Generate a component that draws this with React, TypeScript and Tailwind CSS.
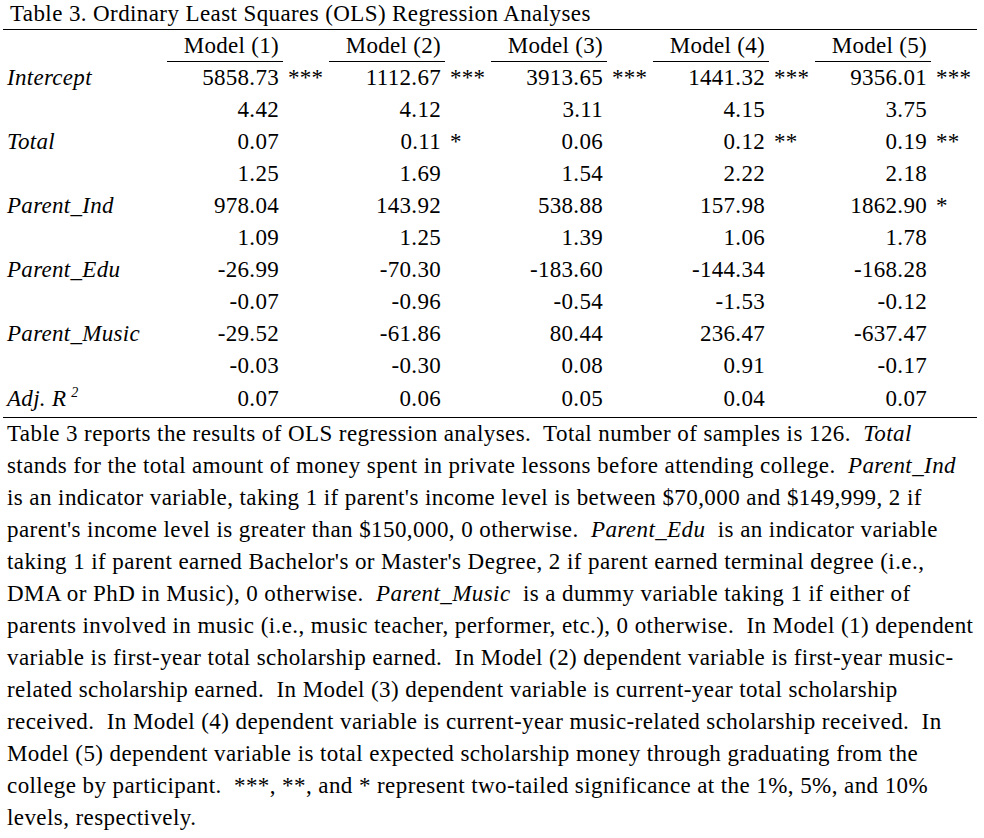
import React from "react";

type Cell = { v: string; s?: string };

const rows: { label: string; cells: Cell[] }[] = [
  { label: "Intercept", cells: [{ v: "5858.73", s: "***" }, { v: "1112.67", s: "***" }, { v: "3913.65", s: "***" }, { v: "1441.32", s: "***" }, { v: "9356.01", s: "***" }] },
  { label: "", cells: [{ v: "4.42" }, { v: "4.12" }, { v: "3.11" }, { v: "4.15" }, { v: "3.75" }] },
  { label: "Total", cells: [{ v: "0.07" }, { v: "0.11", s: "*" }, { v: "0.06" }, { v: "0.12", s: "**" }, { v: "0.19", s: "**" }] },
  { label: "", cells: [{ v: "1.25" }, { v: "1.69" }, { v: "1.54" }, { v: "2.22" }, { v: "2.18" }] },
  { label: "Parent_Ind", cells: [{ v: "978.04" }, { v: "143.92" }, { v: "538.88" }, { v: "157.98" }, { v: "1862.90", s: "*" }] },
  { label: "", cells: [{ v: "1.09" }, { v: "1.25" }, { v: "1.39" }, { v: "1.06" }, { v: "1.78" }] },
  { label: "Parent_Edu", cells: [{ v: "-26.99" }, { v: "-70.30" }, { v: "-183.60" }, { v: "-144.34" }, { v: "-168.28" }] },
  { label: "", cells: [{ v: "-0.07" }, { v: "-0.96" }, { v: "-0.54" }, { v: "-1.53" }, { v: "-0.12" }] },
  { label: "Parent_Music", cells: [{ v: "-29.52" }, { v: "-61.86" }, { v: "80.44" }, { v: "236.47" }, { v: "-637.47" }] },
  { label: "", cells: [{ v: "-0.03" }, { v: "-0.30" }, { v: "0.08" }, { v: "0.91" }, { v: "-0.17" }] },
];

const adj: Cell[] = [{ v: "0.07" }, { v: "0.06" }, { v: "0.05" }, { v: "0.04" }, { v: "0.07" }];

const para: React.ReactNode[] = [
  <>Table 3 reports the results of OLS regression analyses.  Total number of samples is 126.  <span className="italic">Total</span></>,
  <>stands for the total amount of money spent in private lessons before attending college.  <span className="italic">Parent_Ind</span></>,
  <>is an indicator variable, taking 1 if parent's income level is between $70,000 and $149,999, 2 if</>,
  <>parent's income level is greater than $150,000, 0 otherwise.  <span className="italic">Parent_Edu</span>  is an indicator variable</>,
  <>taking 1 if parent earned Bachelor's or Master's Degree, 2 if parent earned terminal degree (i.e.,</>,
  <>DMA or PhD in Music), 0 otherwise.  <span className="italic">Parent_Music</span>  is a dummy variable taking 1 if either of</>,
  <>parents involved in music (i.e., music teacher, performer, etc.), 0 otherwise.  In Model (1) dependent</>,
  <>variable is first-year total scholarship earned.  In Model (2) dependent variable is first-year music-</>,
  <>related scholarship earned.  In Model (3) dependent variable is current-year total scholarship</>,
  <>received.  In Model (4) dependent variable is current-year music-related scholarship received.  In</>,
  <>Model (5) dependent variable is total expected scholarship money through graduating from the</>,
  <>college by participant.  ***, **, and * represent two-tailed significance at the 1%, 5%, and 10%</>,
  <>levels, respectively.</>,
];

function Row({ label, cells, last }: { label: React.ReactNode; cells: Cell[]; last?: boolean }) {
  return (
    <div
      className={
        last
          ? "grid grid-cols-[164px_116px_46px_116px_46px_116px_46px_116px_46px_116px_46px] h-[36px] leading-[34px] border-b border-black"
          : "grid grid-cols-[164px_116px_46px_116px_46px_116px_46px_116px_46px_116px_46px] h-[32px] leading-[32px]"
      }
    >
      <div className="pl-[4px] italic whitespace-pre">{label}</div>
      {cells.map((c, i) => (
        <React.Fragment key={i}>
          <div className="text-right pr-[4px] whitespace-pre">{c.v}</div>
          <div className="pl-[5px] whitespace-pre">{c.s ?? ""}</div>
        </React.Fragment>
      ))}
    </div>
  );
}

export default function App() {
  return (
    <div className="w-[984px] h-[838px] bg-white text-black overflow-hidden font-['Liberation_Serif']">
      <div className="ml-[3px] w-[974px] text-[23px] tracking-[0.3px]">
        <div className="h-[30px] leading-[28px] pl-[7px] whitespace-pre border-b border-black tracking-[0.4px]">
          Table 3. Ordinary Least Squares (OLS) Regression Analyses
        </div>
        <div className="grid grid-cols-[164px_116px_46px_116px_46px_116px_46px_116px_46px_116px_46px] h-[32px] leading-[31px]">
          <div />
          {[1, 2, 3, 4, 5].map((n) => (
            <React.Fragment key={n}>
              <div className="text-right pr-[4px] border-b border-black whitespace-pre">Model ({n})</div>
              <div />
            </React.Fragment>
          ))}
        </div>
        {rows.map((r, i) => (
          <Row key={i} label={r.label} cells={r.cells} />
        ))}
        <Row
          last
          label={
            <>
              Adj. R<sup className="text-[14px] ml-[5px] relative -top-[9px]">2</sup>
            </>
          }
          cells={adj}
        />
      </div>
      <div className="pl-[7px] text-[23px] leading-[32px] tracking-[0.42px]">
        {para.map((p, i) => (
          <div key={i} className="whitespace-pre">
            {p}
          </div>
        ))}
      </div>
    </div>
  );
}
